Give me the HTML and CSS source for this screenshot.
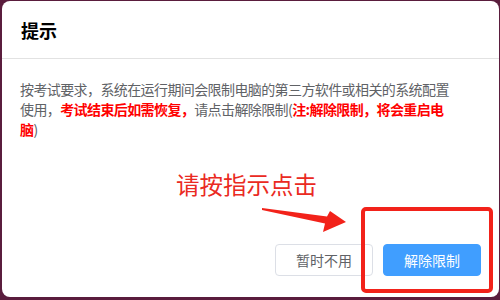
FILE: index.html
```html
<html>
<head>
	<meta charset="utf-8">
	<title>提示</title>
	<link rel="stylesheet" href="styles.css">
</head>
<body>
	<div class="screen">
		<div class="dialog">
			<header class="dialog-head">
				<h1>提示</h1>
			</header>
			<section class="dialog-body">
				<p class="msg">按考试要求，系统在运行期间会限制电脑的第三方软件或相关的系统配置<br>使用，<b class="warn">考试结束后如需恢复，</b>请点击解除限制(<b class="warn">注:解除限制，将会重启电<br>脑</b>)</p>
			</section>
			<footer class="dialog-foot">
				<div class="btn">暂时不用</div>
				<div class="btn btn-primary">解除限制</div>
			</footer>
		</div>
		<div class="mark">
			<div class="mark-text">请按指示点击</div>
			<svg class="mark-arrow" width="500" height="300" viewBox="0 0 500 300">
				<polygon points="262,208 327,216.5 330,211 346,222 323,232 325,223.5 262,210" fill="#f2221a"/>
			</svg>
			<div class="mark-box"></div>
		</div>
	</div>
</body>
</html>
```

FILE: styles.css
```css
body {
	margin: 0;
	background-color: #5a1d3d;
	font-family: "Noto Sans CJK SC", "Noto Sans", sans-serif;
}
.screen {
	position: relative;
	width: 500px;
	height: 300px;
	overflow: hidden;
}
.dialog {
	margin: 1px 1px 0 2px;
	width: 497px;
	height: 296px;
	background-color: #fff;
	border-radius: 8px;
	display: flex;
	flex-direction: column;
}
.dialog-head {
	padding: 17px 20px 16px 19px;
	border-bottom: 1px solid #e2e2e2;
}
.dialog-head h1 {
	margin: 0;
	font-size: 18px;
	line-height: 24px;
	font-weight: bold;
	color: #000;
}
.dialog-body {
	padding: 20px 0 0 18px;
}
.msg {
	margin: 0;
	white-space: nowrap;
	font-size: 14px;
	line-height: 20px;
	letter-spacing: -0.6px;
	color: #606266;
}
.warn {
	color: #f00;
	font-weight: bold;
}
.dialog-foot {
	margin-top: auto;
	padding: 0 18px 21px 20px;
	display: flex;
	justify-content: flex-end;
	gap: 10px;
}
.btn {
	box-sizing: border-box;
	width: 98px;
	height: 32px;
	line-height: 30px;
	text-align: center;
	font-size: 14px;
	color: #606266;
	background-color: #fff;
	border: 1px solid #dcdfe6;
	border-radius: 4px;
}
.btn-primary {
	color: #fff;
	background-color: #409eff;
	border-color: #409eff;
}

/* annotation drawn on top of the screenshot */
.mark {
	position: absolute;
	left: 0;
	top: 0;
	width: 500px;
	height: 300px;
	pointer-events: none;
}
.mark-text {
	position: absolute;
	left: 176px;
	top: 168px;
	font-size: 23.5px;
	line-height: 32px;
	color: #ea2a22;
}
.mark-arrow {
	position: absolute;
	left: 0;
	top: 0;
}
.mark-box {
	position: absolute;
	left: 361px;
	top: 207px;
	width: 124px;
	height: 78px;
	border: 4px solid #f2221a;
	border-radius: 5px;
}
```
